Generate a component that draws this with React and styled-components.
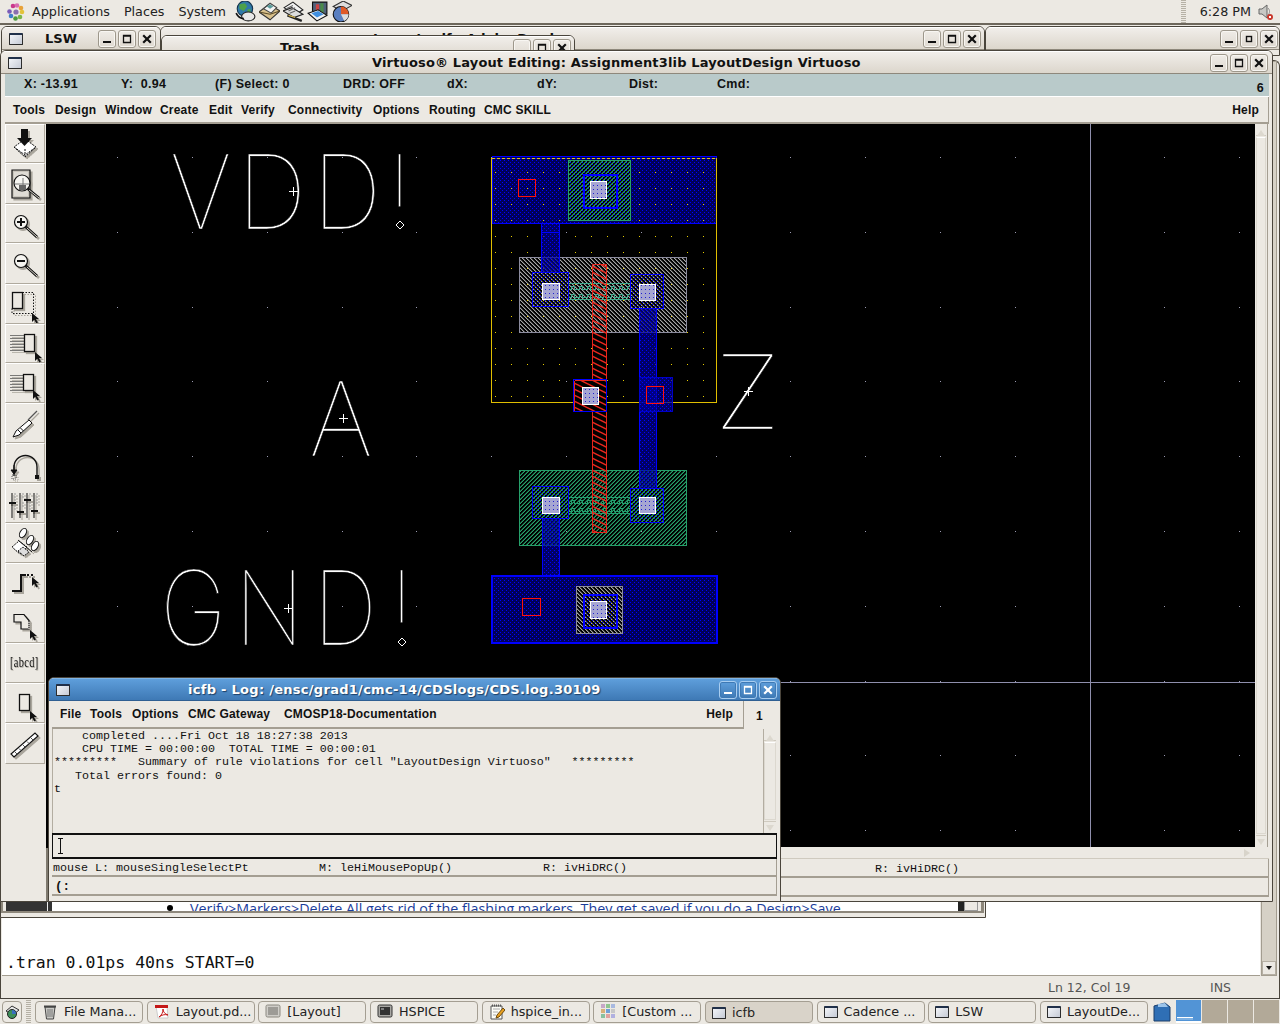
import React from "react";
import styled, { createGlobalStyle } from "styled-components";

const Global = createGlobalStyle`
  html, body { margin: 0; padding: 0; background: #ece9e3; }
  * { box-sizing: border-box; }
`;

const BG = "#ece9e3";
const UI = `"DejaVu Sans", sans-serif`;
const HEL = `"Liberation Sans", Arial, sans-serif`;
const MONO = `"Liberation Mono", monospace`;

const Screen = styled.div`
  width: 1280px; height: 1024px; position: relative; overflow: hidden;
  background: ${BG}; display: flex; flex-direction: column; font-family: ${UI};
`;

/* ---------- top panel ---------- */
const TopPanel = styled.header`
  height: 25px; flex: none; display: flex; align-items: center; padding-left: 7px;
  background: ${BG}; border-bottom: 2px solid #6d675c; color: #222; font-size: 12.75px;
`;
const PanelMenu = styled.span`margin-left: ${(p) => p.$ml}px; white-space: nowrap;`;
const Launchers = styled.div`display: flex; gap: 3px; margin-left: 9px;`;
const Clock = styled.div`
  margin-left: auto; display: flex; align-items: center; height: 100%; color: #222;
`;
const Grip = styled.span`
  width: 5px; height: 23px; margin-right: 14px;
  background: repeating-linear-gradient(to bottom, #b5b0a5 0 1px, #ece9e3 1px 2px);
`;
const Time = styled.span`margin-right: 6px; font-size: 12.75px;`;
const SoundIcon = styled.svg`margin-right: 6px; display: block;`;

/* ---------- desktop ---------- */
const Desktop = styled.main`flex: 1; position: relative; overflow: hidden; min-height: 0;`;
const Win = styled.section`
  position: absolute;
  left: ${(p) => p.$x}px; top: ${(p) => p.$y - 25}px;
  width: ${(p) => p.$w}px; height: ${(p) => p.$h}px;
  border: 1px solid #4a453c; border-bottom-width: ${(p) => (p.$open ? 0 : 1)}px;
  border-radius: 6px 6px 0 0; background: ${BG};
  display: flex; flex-direction: column; overflow: hidden;
`;
const TitleBar = styled.div`
  height: 23px; flex: none; position: relative; display: flex; align-items: center;
  background: ${(p) => (p.$active
    ? "linear-gradient(to bottom, #5e9edb, #3e79b5)"
    : "linear-gradient(to bottom, #f1eeea, #dcd6cc)")};
  border-top: 1px solid ${(p) => (p.$active ? "#7fb4e6" : "#fff")};
  border-bottom: 1px solid ${(p) => (p.$active ? "#2f5f92" : "#8e887c")};
  padding: 0 ${(p) => p.$pr ?? 3}px 0 7px;
`;
const TitleText = styled.span`
  position: absolute; white-space: nowrap;
  left: ${(p) => p.$x}px; top: 3px;
  font: bold 13px ${UI}; letter-spacing: ${(p) => p.$ls ?? 0}px;
  color: ${(p) => (p.$active ? "#fff" : "#111")};
  text-shadow: ${(p) => (p.$active ? "1px 1px 1px #1d3f66" : "none")};
`;
const WinIconBox = styled.span`
  width: 14px; height: 12px; flex: none; display: block;
  border: 1px solid #2c2c2c; border-top-width: 2px;
  background: linear-gradient(135deg, #f2f4f8, #c6cbd6);
  border-top-color: #20304a; border-radius: 1px;
`;
const TitleBtns = styled.div`margin-left: auto; display: flex; gap: 2px;`;
const WinBtn = styled.span`
  width: 18px; height: 18px; display: flex; align-items: center; justify-content: center;
  border: 1px solid ${(p) => (p.$active ? "#a8cdf0" : "#9d978b")};
  border-radius: 3px;
  box-shadow: inset 0 0 0 1px ${(p) => (p.$active ? "#3e79b5" : "#f8f6f2")};
  background: ${(p) => (p.$active ? "linear-gradient(#5e9edb,#3e79b5)" : "linear-gradient(#efece7,#dfd9d0)")};
`;

const Glyph = ({ kind, color = "#111", small }) => (
  <svg width="12" height="12" viewBox="0 0 12 12">
    {kind === "min" && <rect x="2" y="8" width="8" height="2" fill={color} />}
    {kind === "max" && (small
      ? <rect x="3.5" y="3.5" width="5" height="5" fill="none" stroke={color} strokeWidth="1.4" />
      : <path d="M2.5 2.5h7v7h-7z M2 3h8" fill="none" stroke={color} strokeWidth="1.3" />)}
    {kind === "close" && <path d="M2.2 2.2l7.6 7.6M9.8 2.2l-7.6 7.6" stroke={color} strokeWidth="2.2" />}
  </svg>
);
const Buttons = ({ active, small }) => (
  <TitleBtns>
    {["min", "max", "close"].map((k) => (
      <WinBtn key={k} $active={active}>
        <Glyph kind={k} small={small} color={active ? "#fff" : "#111"} />
      </WinBtn>
    ))}
  </TitleBtns>
);

/* ---------- gedit + viewer behind ---------- */
const EditBody = styled.div`flex: 1; display: flex; min-height: 0; padding: 0 2px 0 1px;`;
const EditPage = styled.div`
  flex: 1; background: #fff; border-bottom: 1px solid #a39d90; position: relative;
  display: flex; align-items: flex-end;
`;
const EditLine = styled.div`
  font: 16.5px "DejaVu Sans Mono", monospace; color: #111; white-space: pre; padding: 0 0 3px 4px;
`;
const EditScroll = styled.div`
  width: 16px; border: 1px solid #a39d90; background: #d6d1c6; display: flex; flex-direction: column;
  justify-content: flex-end; margin-left: 1px;
`;
const ScrollEnd = styled.div`
  height: 14px; background: ${BG}; border: 1px solid #b5afa3; display: flex; align-items: center; justify-content: center;
  &::after { content: ""; border: 3px solid transparent; border-top: 4px solid #111; margin-top: 3px; }
`;
const EditStatus = styled.div`
  height: 22px; flex: none; display: flex; align-items: center; position: relative;
  font-size: 12.5px; color: #555; background: ${BG};
`;
const StatusCell = styled.span`position: absolute; left: ${(p) => p.$x}px; top: 4px;`;
const ViewerRow = styled.div`
  flex: 1; display: flex; border: solid #8d877b; border-width: 0 3px 2px 2px; background: ${BG};
  margin: 0 1px 4px 0; overflow: hidden;
`;
const ViewerDark = styled.div`width: 42px; margin-left: 3px; background: #333; flex: none; border-right: 1px solid #eee;`;
const ViewerDark2 = styled.div`width: 4px; background: #333; flex: none;`;
const ViewerPage = styled.div`flex: 1; background: #fff; position: relative; overflow: hidden;`;
const ViewerLine = styled.div`
  position: absolute; left: 138px; top: 18px; white-space: nowrap; color: #1a3d9c; font: 14.3px "Open Sans", sans-serif;
`;
const Bullet = styled.span`
  position: absolute; left: 115px; top: 24px; width: 6px; height: 6px; background: #000; border-radius: 50%;
`;
const ViewerEnd = styled.div`
  width: 23px; flex: none; background: ${BG}; display: flex;
  &::before { content: ""; width: 6px; background: #222; }
  &::after { content: "▾"; width: 12px; border: 1px solid #999; border-top: 0; font-size: 11px; line-height: 30px; text-align: center; overflow: hidden; }
`;

/* ---------- virtuoso main ---------- */
const CoordBar = styled.div`
  height: 23px; flex: none; margin: 0 3px 0 4px; background: #b9caca; border-bottom: 1px solid #fff;
  display: grid; grid-template-columns: 97px 94px 128px 104px 90px 92px 88px 1fr auto;
  padding: 3px 5px 0 19px; font: bold 12.5px ${HEL}; letter-spacing: 0.3px; color: #111; white-space: pre;
`;
const CoordEnd = styled.span`margin-top: 4px;`;
const MenuBar = styled.nav`
  height: ${(p) => p.$h}px; flex: none; display: flex; align-items: center;
  margin: ${(p) => p.$m};
  width: ${(p) => (p.$w ? `${p.$w}px` : "auto")};
  padding: 0 ${(p) => p.$pr}px 0 8px;
  font: bold 12px ${HEL}; letter-spacing: 0.2px; color: #111;
  background: ${BG}; border-bottom: 2px solid #a49e92; border-right: 1px solid #a49e92;
`;
const MenuItem = styled.span`
  flex: none; white-space: nowrap; width: ${(p) => (p.$w ? `${p.$w}px` : "auto")};
`;
const MenuEnd = styled.span`margin-left: auto;`;

const MainBody = styled.div`flex: 1; display: flex; min-height: 0;`;
const ToolCol = styled.div`
  width: 47px; flex: none; padding-left: 4px; background: ${BG};
  border-right: 2px solid; border-image: linear-gradient(to bottom, #000 723px, #7f7a6f 723px) 1;
`;
const ToolBtn = styled.div`
  width: 40px; height: ${(p) => p.$h}px; border-top: 1px solid #fff; border-left: 1px solid #fff;
  border-bottom: 1px solid #b0aa9e; border-right: 1px solid #b0aa9e;
  display: flex; align-items: flex-start; justify-content: flex-start; position: relative;
`;
const ToolSvg = styled.svg`
  display: block; filter: drop-shadow(2px 2px 0 #a9a59c);
`;
const AbcText = styled.span`
  position: absolute; left: 4px; top: 11px; font: 14px "Liberation Serif", serif; letter-spacing: 0.5px; color: #111;
  transform: scaleX(0.74); transform-origin: left; text-shadow: 1px 1px 0 #b5b1a8; white-space: nowrap;
`;
const MainRight = styled.div`flex: 1; display: flex; flex-direction: column; min-width: 0;`;
const WorkRow = styled.div`flex: none; display: flex; height: 723px;`;
const Canvas = styled.svg`display: block; width: 1207px; height: 723px; flex: none; background: #000;`;
const VScroll = styled.div`
  width: 13px; flex: none; display: flex; flex-direction: column; background: ${BG};
  padding: 0 1px; border-right: 1px solid #a49e92;
`;
const ArrowCell = styled.div`
  height: 12px; flex: none; display: flex; justify-content: center;
  ${(p) => p.$down ? "border-top: 1px solid #cfcabf;" : "border-bottom: 1px solid #cfcabf;"}
  &::after { content: ""; margin-top: ${(p) => (p.$down ? 3 : 2)}px; width: 0; height: 0;
    border: 4px solid transparent; ${(p) => (p.$down ? "border-top: 6px solid #dcd8cf;" : "border-bottom: 6px solid #dcd8cf;")} }
`;
const Thumb = styled.div`flex: 1; border: 1px solid #dcd8cf; border-top-color: #fff; margin: 1px 0;`;
const HScroll = styled.div`height: 12px; flex: none; margin: 0 3px 0 0; border-bottom: 1px solid #cfcabf; position: relative;
  &::after { content: ""; position: absolute; right: 15px; top: 2px; border: 4px solid transparent; border-left: 6px solid #d8d4ca; }
`;
const InfoRow = styled.div`
  height: ${(p) => p.$h}px; flex: none; position: relative; margin: ${(p) => p.$m ?? "0 3px 0 0"};
  border-bottom: 2px solid #a49e92; border-right: 1px solid #a49e92;
  font: 11.67px ${MONO}; color: #111; white-space: pre;
`;
const Info = styled.span`position: absolute; left: ${(p) => p.$x}px; top: ${(p) => p.$t ?? 2}px;`;
const Prompt = styled.span`position: absolute; left: 3px; top: 3px; font: bold 12.5px ${MONO}; color: #111;`;

/* ---------- log window ---------- */
const LogBody = styled.div`flex: 1; display: flex; flex-direction: column; padding: 0 3px; min-height: 0;`;
const LogMain = styled.div`height: 104px; flex: none; display: flex;`;
const LogText = styled.pre`
  flex: 1; margin: 0; padding: 1px 0 0 1px; font: 11.67px/13.2px ${MONO}; color: #111;
  border-left: 1px solid #b3ada1;
`;
const LogScroll = styled.div`
  width: 13px; flex: none; border-left: 1px solid #b3ada1; display: flex; flex-direction: column;
`;
const LogSideGap = styled.div`width: 1px; flex: none;`;
const LogInput = styled.div`
  height: 26px; flex: none; border: 2px solid #111; border-left-width: 1px; border-right-width: 1px;
  display: flex; align-items: center; padding-left: 4px; background: ${BG};
`;
const IBeam = styled.svg`display: block;`;
const LogMenuRow = styled.div`flex: none; display: flex;`;
const LogIndex = styled.span`flex: 1; font: bold 12px ${HEL}; color: #111; padding: 8px 0 0 12px;`;

/* ---------- taskbar ---------- */
const TaskBar = styled.footer`
  height: 26px; flex: none; border-top: 1px solid #45413a; background: ${BG};
  display: flex; align-items: center; padding: 0 0 0 2px;
`;
const StartBtn = styled.span`
  width: 20px; height: 22px; border: 1px solid #a49e92; border-radius: 4px; display: flex; align-items: center; justify-content: center; flex: none;
`;
const TaskGrip = styled.span`
  width: 5px; height: 24px; margin: 0 4px; flex: none;
  background: repeating-linear-gradient(to bottom, #b5b0a5 0 1px, #ece9e3 1px 2px);
`;
const TaskButtons = styled.div`display: flex; gap: 3.67px; flex: none;`;
const TaskBtn = styled.div`
  width: 108px; height: 22px; border: 1px solid #a49e92; border-radius: 4px; flex: none;
  display: flex; align-items: center; gap: 6px; padding-left: 6px;
  font-size: 12.75px; color: #222; white-space: nowrap; overflow: hidden;
  background: ${(p) => (p.$active ? "#d9d3c9" : BG)};
  padding-top: ${(p) => (p.$active ? 2 : 0)}px;
`;
const TaskSvg = styled.svg`flex: none; display: block;`;
const DrawerIcon = styled.svg`margin-left: 4px; flex: none; display: block;`;
const Pager = styled.div`display: flex; align-items: stretch; height: 25px; margin-left: 4px; gap: 1px; flex: none; padding: 1px 0;`;
const PagerCell = styled.div`
  width: ${(p) => p.$w}px; background: ${(p) => (p.$on ? "#5294d6" : "#b2a998")};
  position: relative;
  ${(p) => (p.$on ? "border-bottom: 2px solid #fff;" : "")}
`;
const PagerWin = styled.span`position: absolute; left: 1px; bottom: 1px; height: 3px; width: 16px; border-top: 1px solid #fff; background: #7db0e2;`;

/* ---------- drawings ---------- */
const Cursor = ({ x, y }) => (
  <path d={`M${x} ${y}v9l2.3-2.2 2 3.6 1.6-.9-2-3.4h3.1z`} fill="#111" />
);
const Lens = ({ cx = 15, cy = 17, r = 6.5, ex = 31, ey = 32, sign }) => (
  <g>
    <circle cx={cx} cy={cy} r={r} fill="#f6f5f1" stroke="#111" strokeWidth="1.2" />
    <path d={`M${cx + r * 0.72} ${cy + r * 0.72}L${ex} ${ey}`} stroke="#111" strokeWidth="2.6" />
    <path d={`M${cx + r * 0.9} ${cy + r * 0.9}L${ex} ${ey}`} stroke="#dedad2" strokeWidth="1" />
    {sign && <path d={`M${cx - 4} ${cy}h8`} stroke="#111" strokeWidth="2" />}
    {sign === "+" && <path d={`M${cx} ${cy - 4}v8`} stroke="#111" strokeWidth="2" />}
  </g>
);
const Stripes = ({ x, y, w, h }) => (
  <g stroke="#555" strokeWidth="1">
    {Array.from({ length: Math.floor(h / 3) + 1 }, (_, i) => (
      <path key={i} d={`M${x} ${y + i * 3 + 0.5}h${w}`} opacity={0.75} />
    ))}
  </g>
);
const Box = ({ x, y, w, h }) => (
  <rect x={x + 0.5} y={y + 0.5} width={w} height={h} fill="#ece9e3" stroke="#111" strokeWidth="1.3" />
);

const tools = [
  [39, <g key="a"><path d="M19 14l11 8-11 10-11-10z" fill="#fff" stroke="#111" strokeDasharray="2 1" /><path d="M8 22l11 8 11-8M19 24v7" fill="none" stroke="#111" strokeDasharray="2 1" /><path d="M15 4h7v9h4l-7.5 8-7.5-8h4z" fill="#111" /></g>],
  [41, <g key="b"><path d="M6 6h18v28H6z" fill="#c9c5bc" stroke="#111" strokeWidth="1.2" /><path d="M8 8h14v24H8z" fill="#f0eee9" opacity=".55" /><Lens cx={16} cy={19} r={8} ex={33} ey={34} /><path d="M9 20h14M17 14v11" stroke="#777" /><rect x="13" y="21" width="7" height="5" fill="#666" /></g>],
  [39, <Lens key="c" sign="+" />],
  [41, <Lens key="d" sign="-" />],
  [40, <g key="e"><Box x={6} y={7} w={10} h={16} /><path d="M6 23.5V28.5H27.5V7.5H16.5" fill="none" stroke="#111" strokeDasharray="1.5 1.5" /><Cursor x={26} y={28} /></g>],
  [39, <g key="f"><Stripes x={4} y={10} w={14} h={17} /><Box x={18} y={9} w={10} h={17} /><Cursor x={29} y={27} /></g>],
  [40, <g key="g"><Stripes x={4} y={11} w={13} h={16} /><Box x={17} y={10} w={10} h={16} /><Cursor x={27} y={26} /></g>],
  [40, <g key="h"><path d="M7 33l3-6 13-11 3 3-13 12z" fill="#fff" stroke="#111" /><path d="M22 16l9-9" stroke="#555" strokeWidth="1.2" /><path d="M12 26l3 3M14.5 24l3 3" stroke="#111" /></g>],
  [40, <g key="i"><path d="M8 32v-9a11.5 11.5 0 0 1 23 0v9" fill="none" stroke="#111" strokeWidth="1.4" /><path d="M5 26h6l-3 4zM8 21v6" fill="#111" stroke="#111" /><rect x="6" y="31" width="4" height="4" fill="none" stroke="#555" strokeDasharray="1 1" /><rect x="29" y="31" width="4" height="4" fill="#111" /></g>],
  [40, <g key="j"><path d="M6 9v25M14 9v25M21 9v25M28 9v25" stroke="#111" strokeWidth="1" /><path d="M8 10h2M8 13h2M8 16h2M8 22h2M8 25h2M16 10h2M16 13h2M16 19h2M16 22h2M23 10h2M23 19h2M23 22h2M23 25h2M30 10h2M30 13h2M30 16h2M30 19h2" stroke="#999" /><path d="M3 18h7v2H3zM11 27h7v2h-7zM18 15h7v2h-7zM25 26h7v2h-7z" fill="#111" /></g>],
  [40, <g key="k"><g fill="#fff" stroke="#111"><ellipse cx="17" cy="9" rx="3" ry="5" transform="rotate(30 17 9)" /><ellipse cx="24" cy="16" rx="3" ry="5" transform="rotate(30 24 16)" /><ellipse cx="29" cy="22" rx="3" ry="5" transform="rotate(30 29 22)" /></g><path d="M6 23l7-6 8 6-7 7z" fill="#fff" stroke="#111" strokeDasharray="2 1" /><path d="M12 27l6 5 5-4-6-5z" fill="#ddd" stroke="#111" strokeDasharray="2 1" /><path d="M12 16l14 12" stroke="#111" /></g>],
  [40, <g key="l"><path d="M6 27h9V11h5" fill="none" stroke="#111" strokeWidth="2" /><path d="M21 11h8" stroke="#111" strokeWidth="2" strokeDasharray="2 2" /><Cursor x={26} y={13} /></g>],
  [40, <g key="m"><path d="M8 10.5h10l5 6V25h-8v-7H8z" fill="#ece9e3" stroke="#111" strokeWidth="1.2" /><path d="M23 17v8" stroke="#ece9e3" strokeWidth="1.3" /><path d="M23 17v8" stroke="#111" strokeDasharray="1 1" /><Cursor x={24} y={26} /></g>],
  [40, null],
  [40, <g key="o"><Box x={13} y={10} w={10} h={16} /><Cursor x={24} y={27} /></g>],
  [41, <g key="p"><path d="M5 30l24-21 3 3-24 21z" fill="#fff" stroke="#111" strokeWidth="1.1" /><path d="M9 28l2 2M13 24.5l2 2M17 21l2 2M21 17.5l2 2M25 14l2 2" stroke="#555" /></g>],
];

const Defs = () => (
  <defs>
    <pattern id="rail" patternUnits="userSpaceOnUse" width="4" height="4">
      <rect width="4" height="4" fill="#000058" />
      <rect width="1" height="1" fill="#0000ff" /><rect x="2" y="2" width="1" height="1" fill="#0000ff" />
    </pattern>
    <pattern id="strap" patternUnits="userSpaceOnUse" width="4" height="4">
      <rect width="4" height="4" fill="#000090" opacity=".7" />
      <rect width="1" height="1" fill="#0000ff" /><rect x="2" y="2" width="1" height="1" fill="#0000ff" />
    </pattern>
    <pattern id="sparse" patternUnits="userSpaceOnUse" width="4" height="4">
      <rect width="1" height="1" fill="#0000ff" /><rect x="2" y="2" width="1" height="1" fill="#0000ff" />
    </pattern>
    <pattern id="green" patternUnits="userSpaceOnUse" width="4" height="4">
      <path d="M3 0h1v1H3zM2 1h1v1H2zM1 2h1v1H1zM0 3h1v1H0z" fill="#26a06a" />
      <path d="M2 0h1v1H2zM1 1h1v1H1zM0 2h1v1H0zM3 3h1v1H3z" fill="#26a06a" opacity=".55" />
    </pattern>
    <pattern id="gray" patternUnits="userSpaceOnUse" width="4" height="4">
      <path d="M0 0h1v1H0zM1 1h1v1H1zM2 2h1v1H2zM3 3h1v1H3z" fill="#a6a6a6" />
      <path d="M1 0h1v1H1zM2 1h1v1H2zM3 2h1v1H3zM0 3h1v1H0z" fill="#777" opacity=".6" />
    </pattern>
    <pattern id="red" patternUnits="userSpaceOnUse" width="12" height="6">
      <path d="M-12 -6L24 12M-12 0L12 12M-12 -12L24 6" stroke="#e8261c" strokeWidth="1.5" />
    </pattern>
    <pattern id="cut" patternUnits="userSpaceOnUse" width="4" height="4">
      <rect width="4" height="4" fill="#a6a6d2" /><rect x="1" y="1" width="1" height="1" fill="#2020d0" />
    </pattern>
    <pattern id="ydots" patternUnits="userSpaceOnUse" x="495" y="172" width="16" height="16">
      <rect width="1" height="1" fill="#e6cc00" />
    </pattern>
  </defs>
);

const R = ({ b, fill = "none", s, w = 1, dash }) => (
  <rect x={b[0] + 0.5} y={b[1] + 0.5} width={b[2] - b[0]} height={b[3] - b[1]}
    fill={fill} stroke={s} strokeWidth={w} strokeDasharray={dash} />
);
const Cut = ({ b }) => <R b={b} fill="url(#cut)" s="#fff" w={1.5} />;
const Wave = ({ y1, y2, x1 = 568, x2 = 630, c = "#3cab8c" }) => {
  let a = `M${x1} ${y1 + 0.5}H${x2}M${x1} ${y2 + 0.5}H${x2}`;
  for (let x = x1; x < x2; x += 8) {
    a += `M${x} ${y1 + 6.5}h3v-3h3v3h2`;
    a += `M${x} ${y2 - 1.5}h3v-3h3v3h2`;
  }
  return <path d={a} fill="none" stroke={c} />;
};
const Tick = ({ x, y }) => (
  <path d={`M${x - 4} ${y + 0.5}h9M${x + 0.5} ${y - 4}v9`} stroke="#fff" />
);
const PinDot = ({ x, y }) => (
  <g>
    <rect x={x - 6} y={y - 6} width="12" height="12" fill="#000" />
    <path d={`M${x} ${y - 4}l4 4-4 4-4-4z`} fill="none" stroke="#fff" />
  </g>
);
const GridDots = () => {
  const out = [];
  for (let i = -1; i < 15; i++)
    for (let j = -1; j < 10; j++)
      out.push(<rect key={`${i}-${j}`} x={Math.round(192 + 74.8 * i)} y={Math.round(157 + 74.8 * j)} width="1" height="1" fill="#9a9ab0" />);
  return out;
};
const StrokeLabel = styled.text`
  font-family: Inter, "DejaVu Sans", sans-serif; font-weight: 100; font-size: 103px; fill: #fff;
  stroke: #000; stroke-width: 0.6px;
`;

const CanvasDrawing = () => (
  <Canvas viewBox="48 124 1207 723">
    <Defs />
    <GridDots />
    <path d="M1090.5 124V847M780 682.5H1255" stroke="#8f8fad" fill="none" />
    <StrokeLabel transform="translate(172 229) scale(.94 1)" x="-2.4 69.3 149.1 228.3">VDD!</StrokeLabel>
    <StrokeLabel transform="translate(312 456) scale(.97 1)" x="-3.2">A</StrokeLabel>
    <StrokeLabel transform="translate(723 429) scale(1.06 1)" x="-8">Z</StrokeLabel>
    <StrokeLabel transform="translate(165 645) scale(.87 1)" x="-5.4 80.1 170.1 258">GND!</StrokeLabel>
    <PinDot x={400} y={225} /><PinDot x={402} y={642} />
    <Tick x={293} y={191} /><Tick x={343} y={418} /><Tick x={748} y={391} /><Tick x={288} y={608} />
    <g shapeRendering="crispEdges">
      <R b={[492, 156, 716, 223]} fill="url(#rail)" s="#0000ff" />
      <R b={[491, 158, 716, 402]} s="#e0be00" />
      <path d="M492 158.5H716" stroke="#0000ff" />
      <path d="M492 158.5H716" stroke="#e6cc00" strokeDasharray="3 2" />
      <rect x="492" y="158" width="224" height="244" fill="url(#ydots)" />
      <rect x="569" y="161" width="61" height="59" fill="#000" />
      <R b={[568, 160, 630, 220]} fill="url(#green)" s="#26a06a" />
      <R b={[568, 160, 630, 220]} fill="url(#sparse)" s="#26a06a" />
      <R b={[519, 257, 686, 332]} fill="url(#gray)" s="#8b8b9e" />
      <R b={[519, 470, 686, 545]} fill="url(#green)" s="#26a06a" />
      <R b={[541, 223, 559, 272]} fill="url(#strap)" s="#0000ff" />
      <path d="M541 232.5h18" stroke="#0000ff" />
      <R b={[542, 518, 559, 575]} fill="url(#strap)" s="#0000ff" />
      <Wave y1={283} y2={299} /><Wave y1={497} y2={513} c="#22a070" />
      <R b={[639, 308, 656, 488]} fill="url(#strap)" s="#0000ff" />
      <R b={[592, 264, 606, 532]} fill="url(#red)" s="#e8261c" />
      <R b={[532, 272, 568, 306]} fill="url(#sparse)" s="#0000ff" />
      <R b={[630, 274, 663, 308]} fill="url(#sparse)" s="#0000ff" w={1.5} />
      <R b={[532, 486, 568, 518]} fill="url(#sparse)" s="#0000ff" />
      <R b={[630, 488, 663, 522]} fill="url(#sparse)" s="#0000ff" w={1.5} />
      <rect x="574" y="380" width="32" height="31" fill="#000" />
      <R b={[573, 379, 606, 411]} fill="url(#red)" s="#0000ff" w={1.5} />
      <path d="M574.5 380.5H606M574.5 380.5V411" stroke="#e8261c" fill="none" />
      <R b={[639, 377, 672, 411]} fill="url(#strap)" s="#0000c8" />
      <R b={[646, 386, 663, 403]} s="#ff1010" />
      <R b={[518, 179, 535, 196]} s="#ff1010" />
      <R b={[583, 174, 616, 207]} s="#0000ff" w={2} />
      <R b={[491, 575, 716, 642]} fill="url(#rail)" s="#0000ff" w={2} />
      <rect x="577" y="587" width="45" height="46" fill="#000" />
      <R b={[576, 586, 622, 633]} fill="url(#gray)" s="#8b8b9e" />
      <R b={[583, 594, 616, 627]} fill="url(#sparse)" s="#0000ff" w={2} />
      <R b={[522, 598, 540, 615]} s="#ff1010" />
      <Cut b={[590, 181, 606, 198]} /><Cut b={[542, 283, 559, 299]} /><Cut b={[639, 284, 655, 300]} />
      <Cut b={[582, 387, 598, 404]} /><Cut b={[542, 497, 559, 513]} /><Cut b={[639, 497, 655, 513]} />
      <Cut b={[590, 601, 606, 618]} />
    </g>
  </Canvas>
);

/* small colored launcher drawings */
const AppFoot = () => (
  <svg width="18" height="18" viewBox="0 0 18 18">
    {[["#c9398c",6,3],["#d96bb0",10,2.5],["#e8a23a",14,5],["#e3c23a",15,9],["#7ab648",13,14],["#4c9a3e",8.5,15.5],["#3d7fc9",4,13],["#7b5cb8",2.5,8.5]].map(([c,x,y],i)=>(
      <circle key={i} cx={x} cy={y} r="2.3" fill={c} />
    ))}
    <circle cx="9" cy="9" r="2.6" fill="#8a6fb0" />
  </svg>
);
const Launch = ({ kind }) => (
  <svg width="21" height="21" viewBox="1 1 19 19">
    {kind === "globe" && <g><circle cx="10" cy="8" r="7" fill="#2f79a8" stroke="#16324a" /><path d="M5 4l5-1 2 3-3 4-4-2zM12 9l3-1v4l-2 1z" fill="#4ca04a" /><ellipse cx="13" cy="15" rx="6" ry="4" fill="#e8e8e8" stroke="#222" /><path d="M2 12c2 4 5 5 7 5" stroke="#111" strokeWidth="1.5" fill="none" /></g>}
    {kind === "mail" && <g><path d="M1 11l9-7 10 6-9 8z" fill="#d8c08c" stroke="#333" /><path d="M5 8l6-5 6 4-5 5z" fill="#f4f4f4" stroke="#444" /><path d="M8 6l3-2 3 2-3 2z" fill="#5a9a9a" /><path d="M1 11l10 2 9-3" stroke="#5d4c28" fill="none" /></g>}
    {kind === "paper" && <g><path d="M2 7l8-5 9 7-8 5z" fill="#f2f2f2" stroke="#222" /><path d="M1 10l8-3 10 6-8 3z" fill="#ddd" stroke="#222" /><path d="M4 8l6-3M6 10l6-3M7 12l5-2" stroke="#666" /><path d="M5 14l13 5" stroke="#222" strokeWidth="2" /><path d="M6 14l6 2" stroke="#d8b84c" /></g>}
    {kind === "comp" && <g><path d="M6 2h13v11H6z" fill="#50617a" stroke="#111" /><path d="M9 4h3v8H9z" fill="#c44" /><path d="M13 3h3v9h-3z" fill="#4a8a4a" /><path d="M2 12l9-3 8 5-9 5z" fill="#f2f2f2" stroke="#111" /><path d="M5 12l6-2 5 3-6 3z" fill="#3f8fe0" /></g>}
    {kind === "pie" && <g><path d="M3 6l9-5 8 4-9 5z" fill="#ddd" stroke="#333" /><circle cx="10" cy="13" r="7" fill="#5a7fc0" stroke="#111" /><path d="M10 13V6a7 7 0 0 1 7 7z" fill="#e05a28" /><path d="M10 13h7a7 7 0 0 1-4 6z" fill="#ddd" /></g>}
  </svg>
);
const TaskIcon = ({ kind }) => {
  if (kind === "win") return <WinIconBox />;
  return (
    <TaskSvg width="16" height="17" viewBox="0 0 16 17">
      {kind === "trash" && <g><path d="M3 4h10l-1.5 12h-7z" fill="#c9c9c5" stroke="#444" /><path d="M2 3.5h12" stroke="#444" strokeWidth="2" /><path d="M6 6v8M8 6v8M10 6v8" stroke="#777" /></g>}
      {kind === "pdf" && <g><path d="M2 3h11l1 12H4z" fill="#fff" stroke="#ccc" /><path d="M1 2h13v3H1z" fill="#c41818" /><path d="M5 14c3-2 4-5 4-8 0 3 2 5 5 6-4-1-6 0-9 2z" fill="none" stroke="#c41818" /></g>}
      {kind === "term0" && <g><rect x="1" y="2" width="14" height="12" rx="1.5" fill="#cfcdc8" stroke="#8b8880" /><rect x="3" y="4" width="10" height="8" fill="#9d9b96" /></g>}
      {kind === "term" && <g><rect x="1" y="2" width="14" height="12" rx="1.5" fill="#a9a8a4" stroke="#333" /><rect x="3" y="4" width="10" height="8" fill="#333" /><path d="M4 6h3" stroke="#ccc" /></g>}
      {kind === "note" && <g><path d="M2 3h11v13H2z" fill="#fdfdf7" stroke="#555" /><path d="M3 2.5h9" stroke="#555" strokeDasharray="1 1" strokeWidth="2" /><path d="M4 6h7M4 9h5M4 12h3" stroke="#aaa" /><path d="M7 15l1-3 6-7 2 2-6 7z" fill="#e8a020" stroke="#6b4a10" /></g>}
      {kind === "grid" && <g>{[0,1,2].flatMap((r)=>[0,1,2].map((c)=>(<rect key={`${r}${c}`} x={1+c*5} y={1+r*5} width="4" height="4" fill={["#c7a7c7","#8fc58f","#a9b9e0","#d8b07a","#6f9fd8","#c7c7c7","#88c0a0","#e0a0a0","#b0b0e0"][r*3+c]} />)))}</g>}
      {kind === "start" && <g><path d="M2 8l6-5 7 4-6 5z" fill="#e6e6e6" stroke="#333" /><circle cx="8" cy="11" r="4.5" fill="#3e8f5a" stroke="#222" /><path d="M8 11V7a4 4 0 0 1 4 4z" fill="#3a6ec0" /></g>}
    </TaskSvg>
  );
};

const tasks = [
  ["trash", "File Mana..."], ["pdf", "Layout.pd..."], ["term0", "[Layout]"], ["term", "HSPICE"],
  ["note", "hspice_in..."], ["grid", "[Custom ..."], ["win", "icfb", true], ["win", "Cadence ..."],
  ["win", "LSW"], ["win", "LayoutDe..."],
];

const mainMenu = [["Tools", 42], ["Design", 50], ["Window", 55], ["Create", 49], ["Edit", 32], ["Verify", 47], ["Connectivity", 85], ["Options", 56], ["Routing", 55], ["CMC SKILL"]];
const logMenu = [["File", 30], ["Tools", 42], ["Options", 56], ["CMC Gateway", 96], ["CMOSP18-Documentation"]];

const logText = `    completed ....Fri Oct 18 18:27:38 2013
    CPU TIME = 00:00:00  TOTAL TIME = 00:00:01
*********   Summary of rule violations for cell "LayoutDesign Virtuoso"   *********
   Total errors found: 0
t`;

export default function App() {
  return (
    <>
      <Global />
      <Screen>
        <TopPanel>
          <AppFoot />
          <PanelMenu $ml={7}>Applications</PanelMenu>
          <PanelMenu $ml={14}>Places</PanelMenu>
          <PanelMenu $ml={14}>System</PanelMenu>
          <Launchers>
            <Launch kind="globe" /><Launch kind="mail" /><Launch kind="paper" /><Launch kind="comp" /><Launch kind="pie" />
          </Launchers>
          <Clock>
            <Grip />
            <Time>6:28 PM</Time>
            <SoundIcon width="17" height="18" viewBox="0 0 17 18">
              <path d="M2 6h3l5-4v13l-5-4H2z" fill="#c8c8c4" stroke="#666" />
              <path d="M11 5c2 2 2 5 0 7" stroke="#888" fill="none" />
              <circle cx="13" cy="14" r="3" fill="#c9382c" />
              <path d="M12 13l2 2M14 13l-2 2" stroke="#fff" />
            </SoundIcon>
          </Clock>
        </TopPanel>

        <Desktop>
          {/* gedit at the back */}
          <Win $x={0} $y={60} $w={1280} $h={938} $open>
            <EditBody>
              <EditPage><EditLine>.tran 0.01ps 40ns START=0</EditLine></EditPage>
              <EditScroll><ScrollEnd /></EditScroll>
            </EditBody>
            <EditStatus>
              <StatusCell $x={1047}>Ln 12, Col 19</StatusCell>
              <StatusCell $x={1209}>INS</StatusCell>
            </EditStatus>
          </Win>

          {/* PDF viewer strip */}
          <Win $x={0} $y={880} $w={986} $h={38}>
            <ViewerRow>
              <ViewerDark /><ViewerDark2 />
              <ViewerPage>
                <Bullet />
                <ViewerLine>Verify&gt;Markers&gt;Delete All gets rid of the flashing markers. They get saved if you do a Design&gt;Save</ViewerLine>
              </ViewerPage>
              <ViewerEnd />
            </ViewerRow>
          </Win>

          {/* back title bars */}
          <Win $x={985} $y={26} $w={295} $h={30}>
            <TitleBar $pr={1}><Buttons small /></TitleBar>
          </Win>
          <Win $x={160} $y={26} $w={825} $h={30}>
            <TitleBar>
              <TitleText $x={212}>Layout.pdf - Adobe Reader</TitleText>
              <Buttons />
            </TitleBar>
          </Win>
          <Win $x={161} $y={35} $w={414} $h={30}>
            <TitleBar>
              <TitleText $x={118}>Trash</TitleText>
              <Buttons />
            </TitleBar>
          </Win>
          <Win $x={1} $y={26} $w={160} $h={30}>
            <TitleBar $pr={4}>
              <WinIconBox />
              <TitleText $x={43}>LSW</TitleText>
              <Buttons />
            </TitleBar>
          </Win>

          {/* Virtuoso main */}
          <Win $x={0} $y={50} $w={1273} $h={852}>
            <TitleBar $pr={4}>
              <WinIconBox />
              <TitleText $x={371} $ls={0.15}>Virtuoso® Layout Editing: Assignment3lib LayoutDesign Virtuoso</TitleText>
              <Buttons />
            </TitleBar>
            <CoordBar>
              <span>X: -13.91</span><span>Y:  0.94</span><span>(F) Select: 0</span><span>DRD: OFF</span>
              <span>dX:</span><span>dY:</span><span>Dist:</span><span>Cmd:</span><CoordEnd>6</CoordEnd>
            </CoordBar>
            <MenuBar $h={27} $m="0 3px 0 4px" $pr={9}>
              {mainMenu.map(([m, w]) => <MenuItem key={m} $w={w}>{m}</MenuItem>)}
              <MenuEnd>Help</MenuEnd>
            </MenuBar>
            <MainBody>
              <ToolCol>
                {tools.map(([h, draw], i) => (
                  <ToolBtn key={i} $h={h}>
                    {draw ? <ToolSvg width="38" height="38" viewBox="0 0 38 38">{draw}</ToolSvg> : <AbcText>[abcd]</AbcText>}
                  </ToolBtn>
                ))}
              </ToolCol>
              <MainRight>
                <WorkRow>
                  <CanvasDrawing />
                  <VScroll><ArrowCell /><Thumb /><ArrowCell $down /></VScroll>
                </WorkRow>
                <HScroll />
                <InfoRow $h={19}><Info $x={827} $t={3}>R: ivHiDRC()</Info></InfoRow>
                <InfoRow $h={19} />
              </MainRight>
            </MainBody>
          </Win>

          {/* Log window */}
          <Win $x={48} $y={677} $w={733} $h={225}>
            <TitleBar $active>
              <WinIconBox />
              <TitleText $x={139} $active $ls={0.28}>icfb - Log: /ensc/grad1/cmc-14/CDSlogs/CDS.log.30109</TitleText>
              <Buttons active />
            </TitleBar>
            <LogBody>
              <LogMenuRow>
                <MenuBar $h={28} $m="0" $w={692} $pr={10}>
                  {logMenu.map(([m, w]) => <MenuItem key={m} $w={w}>{m}</MenuItem>)}
                  <MenuEnd>Help</MenuEnd>
                </MenuBar>
                <LogIndex>1</LogIndex>
              </LogMenuRow>
              <LogMain>
                <LogText>{logText}</LogText>
                <LogScroll><ArrowCell /><Thumb /><ArrowCell $down /></LogScroll>
                <LogSideGap />
              </LogMain>
              <LogInput>
                <IBeam width="7" height="16" viewBox="0 0 7 16">
                  <path d="M1 .5h5M3.5 .5v15M1 15.5h5" stroke="#111" fill="none" />
                </IBeam>
              </LogInput>
              <InfoRow $h={18} $m="0">
                <Info $x={1} $t={2}>mouse L: mouseSingleSelectPt</Info>
                <Info $x={267} $t={2}>M: leHiMousePopUp()</Info>
                <Info $x={491} $t={2}>R: ivHiDRC()</Info>
              </InfoRow>
              <InfoRow $h={19} $m="0"><Prompt>(:</Prompt></InfoRow>
            </LogBody>
          </Win>
        </Desktop>

        <TaskBar>
          <StartBtn><TaskIcon kind="start" /></StartBtn>
          <TaskGrip />
          <TaskButtons>
            {tasks.map(([icon, label, active]) => (
              <TaskBtn key={label} $active={active}>
                <TaskIcon kind={icon} />
                <span>{label}</span>
              </TaskBtn>
            ))}
          </TaskButtons>
          <DrawerIcon width="20" height="22" viewBox="0 0 20 22">
            <path d="M2 5l11-3 5 4v14H2z" fill="#2f6fb5" stroke="#1c3f6b" />
            <path d="M6 3l7-1 3 4H6z" fill="#9cc4ea" />
          </DrawerIcon>
          <Pager>
            <PagerCell $w={25} $on><PagerWin /></PagerCell>
            <PagerCell $w={25} /><PagerCell $w={25} /><PagerCell $w={25} />
          </Pager>
        </TaskBar>
      </Screen>
    </>
  );
}
